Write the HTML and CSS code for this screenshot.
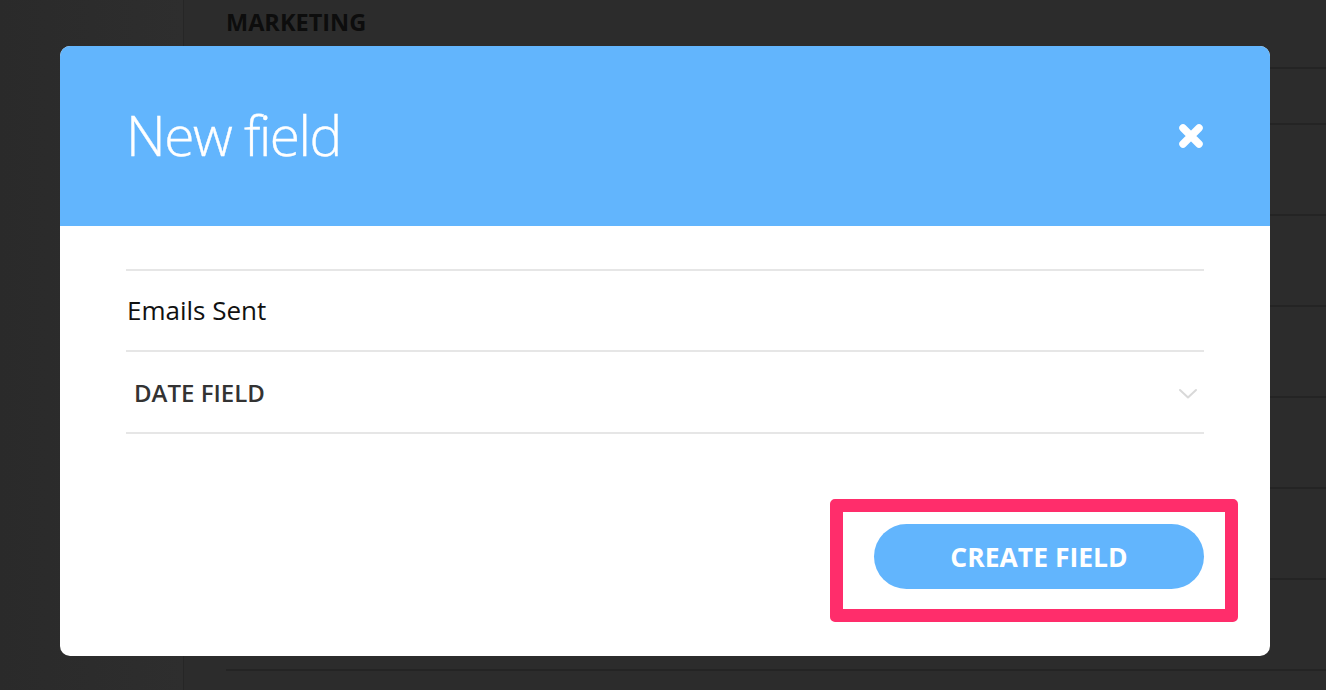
FILE: index.html
```html
<!DOCTYPE html>
<html>
<head>
<meta charset="utf-8">
<link rel="stylesheet" href="styles.css">
</head>
<body>
<div class="app">
  <aside class="sidebar"></aside>
  <main class="main">
    <h2 class="section-title">MARKETING</h2>
    <div class="row row-first"></div>
    <div class="row row-second"></div>
    <div class="row"></div>
    <div class="row"></div>
    <div class="row"></div>
    <div class="row"></div>
    <div class="row"></div>
    <div class="row"></div>
  </main>
</div>

<div class="modal">
  <header class="modal-header">
    <h1 class="modal-title">New field</h1>
    <button class="close" aria-label="Close">
      <svg width="30" height="30" viewBox="0 0 30 30">
        <path d="M7 7 L23 23 M23 7 L7 23" stroke="#fff" stroke-width="7.5" stroke-linecap="round" fill="none"/>
      </svg>
    </button>
  </header>
  <div class="modal-body">
    <div class="field field-name">Emails Sent</div>
    <div class="field field-select">
      <span>DATE FIELD</span>
      <svg class="chevron" width="20" height="12" viewBox="0 0 20 12">
        <path d="M2 2 L10 9.5 L18 2" stroke="#d9d9d9" stroke-width="2" fill="none" stroke-linecap="round" stroke-linejoin="round"/>
      </svg>
    </div>
    <div class="actions">
      <button class="create">CREATE FIELD</button>
    </div>
  </div>
  <div class="highlight"></div>
</div>
</body>
</html>
```

FILE: styles.css
```css
* { box-sizing: border-box; }
html, body {
  margin: 0;
  padding: 0;
  width: 1326px;
  height: 690px;
  overflow: hidden;
  background: #2c2c2c;
  font-family: "Open Sans", "Liberation Sans", sans-serif;
}
.app {
  display: flex;
  height: 690px;
}
.sidebar {
  width: 184px;
  flex: none;
  background: linear-gradient(90deg, #2a2a2a, #2e2e2e);
  border-right: 1px solid #262626;
}
.main {
  flex: 1;
  padding-left: 42px;
}
.section-title {
  margin: 0;
  padding-top: 6px;
  height: 32px;
  font-size: 23.5px;
  font-weight: 700;
  color: #0d0d0d;
  line-height: 32px;
}
.row {
  height: 91px;
  border-bottom: 2px solid #242424;
}
.row-first {
  height: 37px;
}
.row-second {
  height: 56px;
}
.modal {
  position: absolute;
  left: 60px;
  top: 46px;
  width: 1210px;
  height: 610px;
  background: #fff;
  border-radius: 10px;
  overflow: hidden;
}
.modal-header {
  height: 180px;
  background: #62b5fd;
  display: flex;
  align-items: center;
  justify-content: space-between;
  padding: 0 64px 0 66px;
}
.modal-title {
  margin: 0;
  color: #fff;
  font-weight: 300;
  font-size: 55px;
  letter-spacing: -1.5px;
  line-height: 1;
  padding-bottom: 4px;
  -webkit-text-stroke: 0.4px #fff;
}
.close {
  border: 0;
  background: none;
  padding: 0;
  width: 30px;
  height: 30px;
  display: flex;
  filter: blur(0.5px);
}
.modal-body {
  padding: 43px 66px 0 66px;
}
.field {
  border-top: 2px solid #e6e6e6;
  display: flex;
  align-items: center;
}
.field-name {
  height: 81px;
  font-size: 26px;
  color: #111;
  padding-left: 1px;
  padding-bottom: 2px;
}
.field-select {
  height: 84px;
  border-bottom: 2px solid #e6e6e6;
  justify-content: space-between;
  padding: 0 6px 0 8px;
  font-size: 24px;
  font-weight: 600;
  color: #333;
}
.chevron {
  margin-top: 4px;
}
.actions {
  display: flex;
  justify-content: flex-end;
  padding-top: 90px;
}
.create {
  width: 330px;
  height: 65px;
  border: 0;
  border-radius: 33px;
  background: #62b5fd;
  color: #fff;
  font-family: "Open Sans", "Liberation Sans", sans-serif;
  font-size: 26.5px;
  font-weight: 700;
  padding: 0;
}
.highlight {
  position: absolute;
  left: 770px;
  top: 453px;
  width: 408px;
  height: 123px;
  border: 13px solid #ff2d6b;
  border-radius: 5px;
}
```
